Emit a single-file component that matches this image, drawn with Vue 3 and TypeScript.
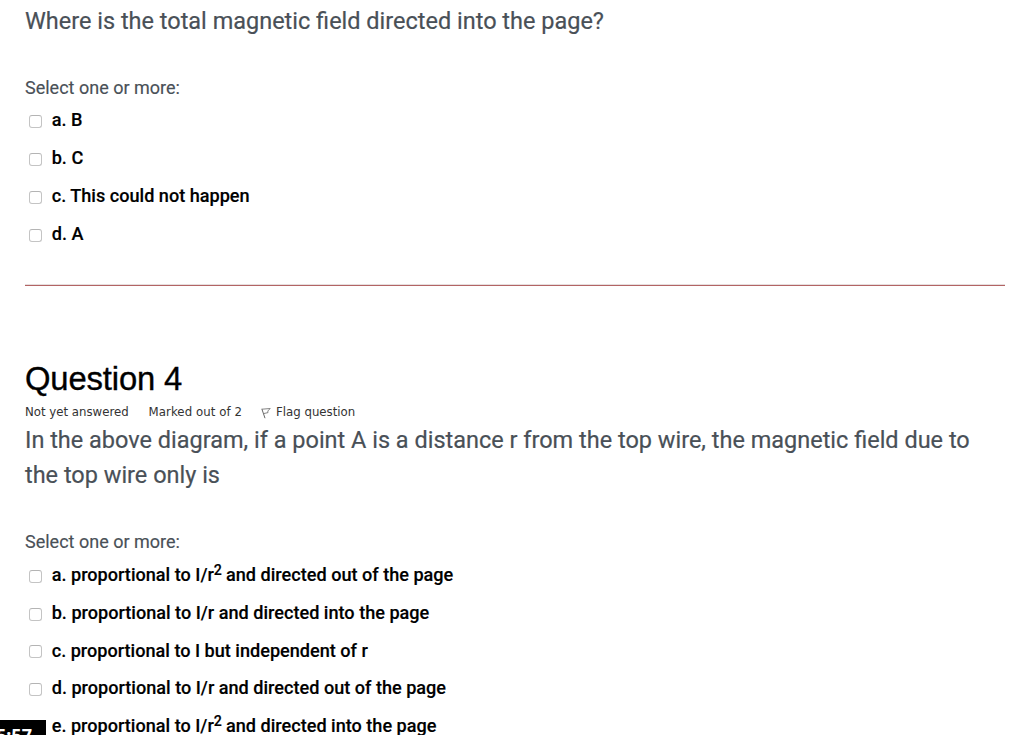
<script setup lang="ts">
interface Choice {
  letter: string
  text: string
  sup?: string
  rest?: string
}

const fieldChoices: Choice[] = [
  { letter: 'a', text: 'B' },
  { letter: 'b', text: 'C' },
  { letter: 'c', text: 'This could not happen' },
  { letter: 'd', text: 'A' },
]

const wireChoices: Choice[] = [
  { letter: 'a', text: 'proportional to I/r', sup: '2', rest: ' and directed out of the page' },
  { letter: 'b', text: 'proportional to I/r and directed into the page' },
  { letter: 'c', text: 'proportional to I but independent of r' },
  { letter: 'd', text: 'proportional to I/r and directed out of the page' },
  { letter: 'e', text: 'proportional to I/r', sup: '2', rest: ' and directed into the page' },
]
</script>

<template>
  <main class="quiz">
    <section class="question first">
      <p class="prompt">Where is the total magnetic field directed into the page?</p>
      <p class="hint">Select one or more:</p>
      <ul class="choices">
        <li v-for="c in fieldChoices" :key="c.letter">
          <span class="box"></span><span class="label">{{ c.letter }}. {{ c.text }}</span>
        </li>
      </ul>
    </section>
    <hr class="rule" />
    <section class="question second">
      <h2 class="title">Question 4</h2>
      <div class="meta">
        <span class="state">Not yet answered</span>
        <span class="grade">Marked out of 2</span>
        <svg class="flag" width="10" height="12" viewBox="0 0 10 12" fill="none" stroke="#666" stroke-width="1">
          <path d="M0.8 1.8 L4 11.2" />
          <path d="M1 2.2 L9.2 1.5 L6.8 4 L7 5.6 L2.6 6.6" stroke="#777" stroke-width="0.9" />
        </svg>
        <span class="flag-text">Flag question</span>
      </div>
      <p class="prompt">In the above diagram, if a point A is a distance r from the top wire, the magnetic field due to<br />the top wire only is</p>
      <p class="hint">Select one or more:</p>
      <ul class="choices">
        <li v-for="c in wireChoices" :key="c.letter">
          <span class="box"></span><span class="label">{{ c.letter }}. {{ c.text }}<sup v-if="c.sup">{{ c.sup }}</sup>{{ c.rest }}</span>
        </li>
      </ul>
    </section>
    <div class="timer"><span>5:57</span></div>
  </main>
</template>

<style>
body { background: #fff; }
</style>

<style scoped>
.quiz {
  position: relative;
  width: 1024px;
  height: 735px;
  overflow: hidden;
  box-sizing: border-box;
  padding: 3px 19px 0 25px;
  font-family: Roboto, "Liberation Sans", sans-serif;
  color: #000;
}
p, h2, ul { margin: 0; padding: 0; }
.prompt { font-size: 23.49px; line-height: 35.5px; color: #495057; white-space: nowrap; -webkit-text-stroke: 0.2px #495057; }
.first .prompt { padding-top: 0.5px; }
.first .hint { margin-top: 36.5px; }
.second .prompt { line-height: 35px; margin-top: -0.5px; }
.hint { font-size: 18px; line-height: 24px; color: #495057; -webkit-text-stroke: 0.15px #495057; }
.second .hint { margin-top: 37.6px; }
.choices { list-style: none; margin-top: 1px; }
.choices li { display: flex; height: 38px; align-items: flex-start; }
.second .choices li { height: 37.75px; }
.box {
  width: 13px; height: 13px; box-sizing: border-box; margin: 14.6px 10px 0 4px;
  border: 1px solid #c4c4c4; border-top-color: #b4b4b4; border-radius: 3px; flex: none;
}
.label { margin-left: -0.3px; font-size: 18.1px; line-height: 38.6px; font-weight: 500; white-space: nowrap; -webkit-text-stroke: 0.15px #000; }
.second .label { line-height: 39.2px; }
.label sup { font-size: 14.2px; line-height: 0; position: relative; top: -6px; vertical-align: baseline; margin-right: -0.4px; font-weight: 500; }
.rule { height: 1px; border: 0; border-top: 1px solid #e6dede; margin: 31.6px 0 0; background: #b36464; }
.title { margin-top: 72px; font: 400 32.8px/42px "Liberation Sans", sans-serif; letter-spacing: -0.15px; -webkit-text-stroke: 0.35px #000; }
.meta { display: flex; height: 23px; align-items: center; font: 11.75px/23px "DejaVu Sans", sans-serif; color: #333; white-space: nowrap; }
.meta span { position: relative; top: 1px; }
.state { width: 123.5px; }
.grade { width: 112.5px; letter-spacing: 0.07px; }
.flag { margin: 2px 5px 0 0; }
.timer {
  position: absolute; left: 0; top: 720px; width: 46px; height: 15px; background: #000; color: #fff;
  font: bold 18px/30px "Noto Sans", sans-serif; overflow: hidden;
}
.timer span { display: block; margin-left: -4px; }
</style>
